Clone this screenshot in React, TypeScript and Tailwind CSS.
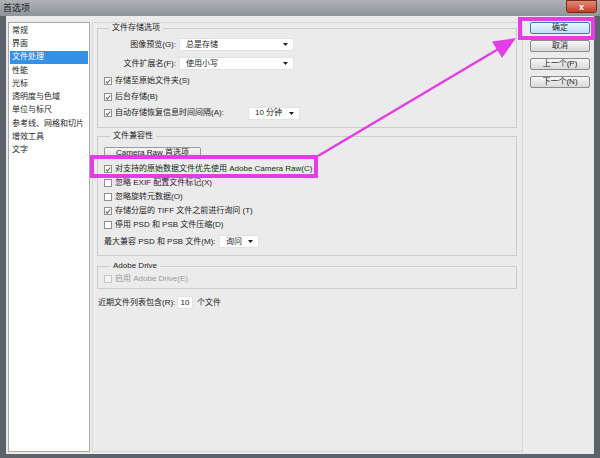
import React from "react";

const font = "font-['Liberation_Sans','Noto_Sans_CJK_SC',sans-serif]";

function Check({ checked, disabled }: { checked?: boolean; disabled?: boolean }) {
    return (
        <span
            className={`w-[8px] h-[8px] shrink-0 border flex items-center justify-center ${
                disabled ? "border-[#c4c4c4] bg-[#f4f4f4]" : "border-[#8f8f8f] bg-white"
            }`}
        >
            {checked && (
                <svg width="7" height="7" viewBox="0 0 7 7">
                    <path d="M1 3.6 L2.8 5.4 L6 1.2" fill="none" stroke="#4a5a78" strokeWidth="1.2" />
                </svg>
            )}
        </span>
    );
}

function CheckRow({ label, checked, disabled, h = "h-[12px]" }: { label: string; checked?: boolean; disabled?: boolean; h?: string }) {
    return (
        <div className={`flex items-center gap-[3px] ${h}`}>
            <Check checked={checked} disabled={disabled} />
            <span className={disabled ? "text-[#9a9a9a]" : ""}>{label}</span>
        </div>
    );
}

function Select({ value, w }: { value: string; w: string }) {
    return (
        <div className={`${w} h-[13px] bg-white border border-[#e2e2e2] flex items-center justify-between pl-[6px] pr-[5px]`}>
            <span>{value}</span>
            <svg width="5" height="3" viewBox="0 0 5 3">
                <path d="M0 0 H5 L2.5 3 Z" fill="#222" />
            </svg>
        </div>
    );
}

function Btn({ label, primary }: { label: string; primary?: boolean }) {
    return (
        <div
            className={`h-[12px] w-[60px] rounded-[2px] border flex items-center justify-center ${
                primary
                    ? "border-[#3c7fb1] bg-gradient-to-b from-[#eaf6fd] to-[#bfe0f5]"
                    : "border-[#8a8a8a] bg-gradient-to-b from-[#f6f6f6] to-[#d9d9d9]"
            }`}
        >
            {label}
        </div>
    );
}

const menu = ["常规", "界面", "文件处理", "性能", "光标", "透明度与色域", "单位与标尺", "参考线、网格和切片", "增效工具", "文字"];

export default function App() {
    return (
        <div className={`relative w-[600px] h-[458px] bg-[#5d636b] flex flex-col text-[8px] leading-[10px] text-[#1c1c1c] ${font}`}>
            {/* title bar */}
            <div className="h-[16px] flex items-start justify-between bg-gradient-to-b from-[#aeb2b7] to-[#8e949a]">
                <span className="pl-[3px] pt-[3px] text-[9px] text-[#202020]">首选项</span>
                <div className="w-[31px] h-[13px] mr-[3px] rounded-b-[3px] bg-gradient-to-b from-[#e08a78] to-[#c43c22] border border-[#7a2a1c] flex items-center justify-center text-white text-[9px] font-bold">
                    x
                </div>
            </div>

            {/* dialog body */}
            <div className="flex-1 mx-[6px] mb-[4px] bg-[#ebebeb] flex">
                {/* category list */}
                <div className="ml-[2px] mt-[6px] mb-[2px] w-[82px] bg-white border border-[#a8a8a8] pt-[1px] px-[1px]">
                    {menu.map((m) => (
                        <div
                            key={m}
                            className={`h-[13.3px] flex items-center pl-[2px] ${m === "文件处理" ? "bg-[#3391e8] text-white" : ""}`}
                        >
                            {m}
                        </div>
                    ))}
                </div>

                {/* main panel */}
                <div className="ml-[2px] mt-[6px] mb-[2px] w-[431px] border border-[#d6d6d6] px-[4px] flex flex-col">
                    <fieldset className="border border-[#cdcdcd] pl-[5px] pb-[8px] mr-[1px]">
                        <legend className="ml-[6px] px-[3px]">文件存储选项</legend>
                        <div className="flex flex-col pt-[5px]">
                            <div className="flex items-center h-[13px]">
                                <span className="w-[76px] text-right pr-[3px]">图像预览(G):</span>
                                <Select value="总是存储" w="w-[115px]" />
                            </div>
                            <div className="flex items-center h-[13px] mt-[6px]">
                                <span className="w-[76px] text-right pr-[3px]">文件扩展名(F):</span>
                                <Select value="使用小写" w="w-[115px]" />
                            </div>
                            <div className="pl-[1px] mt-[5px] flex flex-col gap-[4px]">
                                <CheckRow label="存储至原始文件夹(S)" checked />
                                <CheckRow label="后台存储(B)" checked />
                                <div className="flex items-center h-[12px] gap-[3px]">
                                    <Check checked />
                                    <span className="w-[130px]">自动存储恢复信息时间间隔(A):</span>
                                    <Select value="10 分钟" w="w-[52px]" />
                                </div>
                            </div>
                        </div>
                    </fieldset>

                    <fieldset className="border border-[#cdcdcd] pl-[6px] pb-[7px] mt-[3px] mr-[1px]">
                        <legend className="ml-[6px] px-[3px]">文件兼容性</legend>
                        <div className="flex flex-col pt-[6px]">
                            <div className="w-[97px] h-[12px] rounded-[2px] border border-[#9a9a9a] bg-gradient-to-b from-[#f6f6f6] to-[#dcdcdc] flex items-center justify-center">
                                Camera Raw 首选项
                            </div>
                            <div className="mt-[3px] flex flex-col">
                                <CheckRow h="h-[14px]" label="对支持的原始数据文件优先使用 Adobe Camera Raw(C)" checked />
                                <CheckRow h="h-[14px]" label="忽略 EXIF 配置文件标记(X)" />
                                <CheckRow h="h-[14px]" label="忽略旋转元数据(O)" />
                                <CheckRow h="h-[14px]" label="存储分层的 TIFF 文件之前进行询问 (T)" checked />
                                <CheckRow h="h-[14px]" label="停用 PSD 和 PSB 文件压缩(D)" />
                            </div>
                            <div className="flex items-center h-[13px] mt-[3px]">
                                <span className="w-[115px]">最大兼容 PSD 和 PSB 文件(M):</span>
                                <Select value="询问" w="w-[40px]" />
                            </div>
                        </div>
                    </fieldset>

                    <fieldset className="border border-[#cdcdcd] pl-[6px] pb-[3px] mt-[5px] mr-[1px]">
                        <legend className="ml-[6px] px-[3px]">Adobe Drive</legend>
                        <div className="pt-[2px]">
                            <CheckRow label="启用 Adobe Drive(E)" disabled />
                        </div>
                    </fieldset>

                    <div className="flex items-center h-[13px] mt-[7px] pl-[1px]">
                        <span className="w-[79px]">近期文件列表包含(R):</span>
                        <span className="w-[16px] h-[13px] bg-white border border-[#e2e2e2] flex items-center justify-center">10</span>
                        <span className="ml-[4px]">个文件</span>
                    </div>
                </div>

                {/* buttons */}
                <div className="ml-[7px] pt-[6px] flex flex-col gap-[6px]">
                    <Btn label="确定" primary />
                    <Btn label="取消" />
                    <Btn label="上一个(P)" />
                    <Btn label="下一个(N)" />
                </div>
            </div>

            {/* annotation overlay */}
            <svg className="absolute inset-0 pointer-events-none" width="600" height="458" viewBox="0 0 600 458">
                <rect x="520" y="19" width="73" height="19" fill="none" stroke="#e23de6" strokeWidth="4" />
                <rect x="92" y="157" width="224" height="19" fill="none" stroke="#e23de6" strokeWidth="4" />
                <line x1="318" y1="156" x2="500" y2="48" stroke="#e23de6" strokeWidth="2.5" />
                <polygon points="516,38 492,41.6 502,58" fill="#e23de6" />
            </svg>
        </div>
    );
}
